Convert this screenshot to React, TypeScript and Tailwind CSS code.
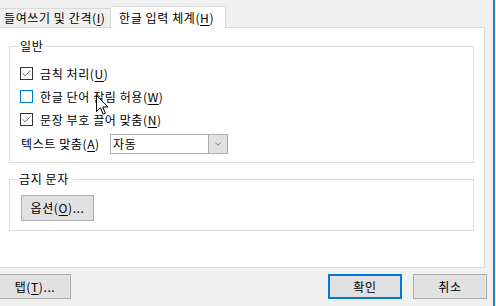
import { Check, ChevronDown } from 'lucide-react';

function Ul({ c }: { c: string }) {
  return (
    <>
      (<span className="underline underline-offset-2">{c}</span>)
    </>
  );
}

function CheckRow({ label, k, checked, hover }: { label: string; k: string; checked?: boolean; hover?: boolean }) {
  return (
    <div className="h-[23px] flex items-center">
      <div
        className={`w-[13px] h-[13px] border bg-white flex items-center justify-center ${
          hover ? 'border-[#0078d7]' : 'border-[#333333]'
        }`}
      >
        {checked && <Check className="w-[11px] h-[11px] text-[#333333]" strokeWidth={1.6} />}
      </div>
      <span className="ml-[7px]">
        {label}
        <Ul c={k} />
      </span>
    </div>
  );
}

export default function App() {
  return (
    <div
      className="relative w-[496px] h-[306px] overflow-hidden bg-[#f0f0f0] text-[12px] leading-[16px] tracking-[0.6px] text-black flex flex-col"
      style={{ fontFamily: '"Noto Sans CJK KR", "Noto Sans", sans-serif' }}
    >
      {/* Tabs */}
      <div className="h-[27px] flex items-end shrink-0">
        <div className="h-[19px] w-[111px] border border-b-0 border-l-0 border-[#d9d9d9] bg-[#f0f0f0] pl-[4px] flex items-center whitespace-nowrap">
          들여쓰기 및 간격<Ul c="I" />
        </div>
        <div className="relative z-10 h-[22px] -mb-px w-[115px] border border-b-0 border-l-0 border-[#d9d9d9] bg-white pl-[8px] flex items-center whitespace-nowrap">
          한글 입력 체계<Ul c="H" />
        </div>
      </div>

      {/* Panel */}
      <div className="w-[485px] h-[241px] border border-l-0 border-[#d9d9d9] bg-white shrink-0 pt-[18px]">
        {/* 일반 */}
        <div className="relative ml-[9px] w-[465px] h-[117px] border border-[#dcdcdc] pl-[10px] pt-[15px]">
          <span className="absolute -top-[9px] left-[8px] bg-white px-[2px]">일반</span>
          <CheckRow label="금칙 처리" k="U" checked />
          <CheckRow label="한글 단어 잘림 허용" k="W" hover />
          <CheckRow label="문장 부호 끌어 맞춤" k="N" checked />
          <div className="mt-[3px] h-[20px] flex items-center">
            <span className="w-[90px] pl-px whitespace-nowrap">
              텍스트 맞춤<Ul c="A" />
            </span>
            <div className="w-[118px] h-[20px] border border-[#adadad] bg-white flex items-stretch">
              <span className="flex-1 pl-[2px] flex items-center">자동</span>
              <div className="w-[19px] bg-[#e1e1e1] border-l border-[#adadad] flex items-center justify-center">
                <ChevronDown className="w-[10px] h-[10px] text-[#444444]" strokeWidth={1.5} />
              </div>
            </div>
          </div>
        </div>

        {/* 금지 문자 */}
        <div className="relative mt-[16px] ml-[9px] w-[465px] h-[52px] border border-[#dcdcdc] pl-[11px] pt-[15px]">
          <span className="absolute -top-[9px] left-[7px] bg-white px-[2px]">금지 문자</span>
          <button className="w-[73px] h-[26px] border border-[#adadad] bg-[#e1e1e1] flex items-center justify-center">
            옵션<Ul c="O" />...
          </button>
        </div>
      </div>

      {/* Bottom buttons */}
      <div className="mt-[6px] h-[25px] flex items-center">
        <button className="w-[71px] h-[25px] border border-l-0 border-[#adadad] bg-[#e1e1e1] flex items-center justify-center">
          탭<Ul c="T" />...
        </button>
        <button className="ml-[257px] w-[74px] h-[25px] border-2 border-[#0078d7] bg-[#e1e1e1] flex items-center justify-center">
          확인
        </button>
        <button className="ml-[11px] w-[74px] h-[25px] border border-[#adadad] bg-[#e1e1e1] flex items-center justify-center">
          취소
        </button>
      </div>

      {/* Window edge */}
      <div className="absolute top-0 bottom-0 left-[493px] w-[2px] bg-[#2b79c2]" />
      <div className="absolute top-0 bottom-0 left-[495px] w-px bg-[#f4f4f4]" />

      {/* Mouse cursor */}
      <svg className="absolute left-[96px] top-[95px]" width="13" height="21" viewBox="0 0 13 21">
        <path
          d="M0.5 0.5 L0.5 16.5 L4.5 12.8 L7.2 19.2 L9.4 18.3 L6.8 12 L12 12 Z"
          fill="white"
          stroke="black"
          strokeWidth="1"
          strokeLinejoin="miter"
        />
      </svg>
    </div>
  );
}
